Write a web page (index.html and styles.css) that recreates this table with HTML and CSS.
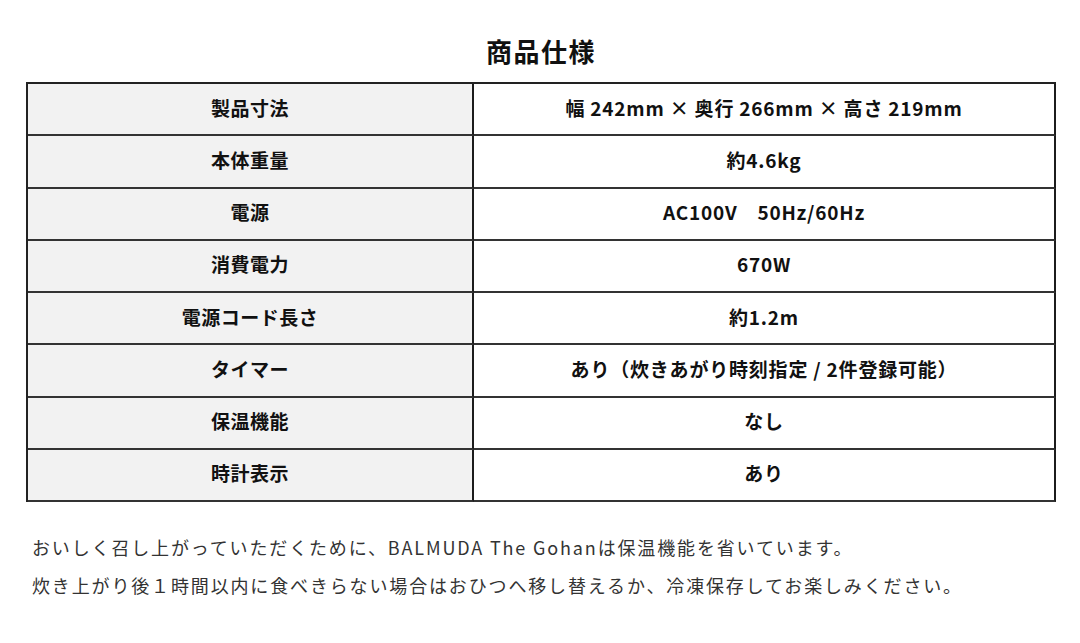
FILE: index.html
```html
<!DOCTYPE html>
<html lang="ja">
<head>
<meta charset="utf-8">
<title>商品仕様</title>
<link rel="stylesheet" href="styles.css">
</head>
<body>
<div class="page">
  <h2 class="title">商品仕様</h2>
  <div class="spec">
    <div class="th">製品寸法</div><div class="td">幅 242mm × 奥行 266mm × 高さ 219mm</div>
    <div class="th">本体重量</div><div class="td">約4.6kg</div>
    <div class="th">電源</div><div class="td">AC100V　50Hz/60Hz</div>
    <div class="th">消費電力</div><div class="td">670W</div>
    <div class="th">電源コード長さ</div><div class="td">約1.2m</div>
    <div class="th">タイマー</div><div class="td">あり（炊きあがり時刻指定 / 2件登録可能）</div>
    <div class="th">保温機能</div><div class="td">なし</div>
    <div class="th">時計表示</div><div class="td">あり</div>
  </div>
  <div class="notes">
    <p>おいしく召し上がっていただくために、BALMUDA The Gohanは保温機能を省いています。</p>
    <p>炊き上がり後１時間以内に食べきらない場合はおひつへ移し替えるか、冷凍保存してお楽しみください。</p>
  </div>
</div>
</body>
</html>
```
FILE: styles.css
```css
html, body {
  margin: 0;
  padding: 0;
  background: #ffffff;
}
body {
  font-family: "Noto Sans CJK JP", "Noto Sans", sans-serif;
  color: #111111;
}
.page {
  padding: 0 24px 0 26px;
}
.title {
  margin: 33px 0 13px;
  font-size: 26px;
  line-height: 36px;
  font-weight: 700;
  text-align: center;
  letter-spacing: 1.5px;
}
.spec {
  display: grid;
  grid-template-columns: 446px 582px;
  border-top: 2px solid #222222;
  border-left: 2px solid #222222;
}
.th, .td {
  height: 46.25px;
  padding-bottom: 4px;
  display: flex;
  align-items: center;
  justify-content: center;
  border-right: 2px solid #1c1c1c;
  border-bottom: 2px solid #333333;
  font-size: 19px;
  font-weight: 700;
  letter-spacing: 0.5px;
}
.th {
  background: #f2f2f2;
}
.td {
  background: #ffffff;
  letter-spacing: 0.8px;
}
.notes {
  margin-top: 26px;
  padding-left: 6px;
}
.notes p {
  margin: 0;
  font-size: 18px;
  line-height: 38px;
  letter-spacing: 1.85px;
  color: #333333;
  font-weight: 400;
}
```
